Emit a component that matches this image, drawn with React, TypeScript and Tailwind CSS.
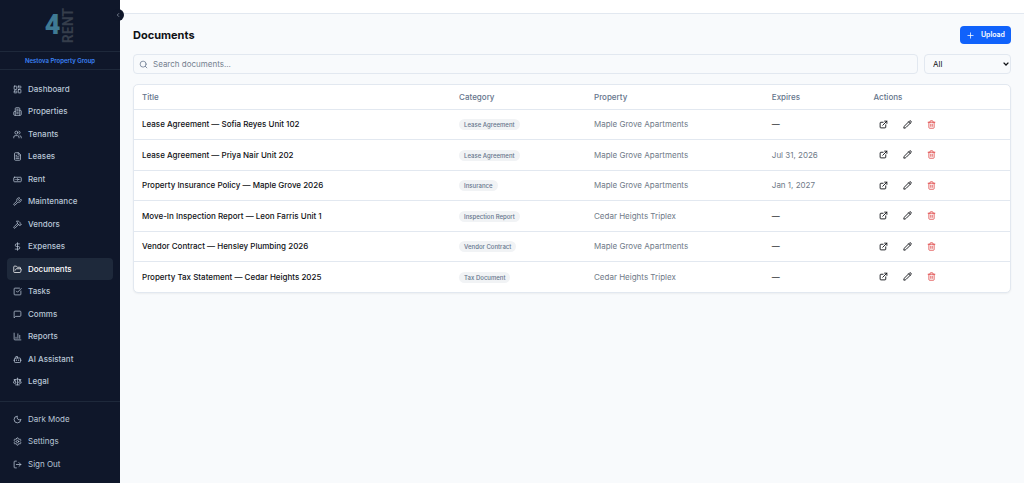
import type { ComponentType } from "react";
import {
  LayoutDashboard, Users, FileText, Banknote, Wrench, Hammer, DollarSign, FolderOpen,
  SquareCheckBig, ChartColumn, Bot, Scale, Moon, Settings, LogOut, ChevronLeft,
  Plus, Search, ExternalLink, Pencil, Trash2,
} from "lucide-react";

type IconProps = { className?: string };
type NavItem = { label: string; icon: ComponentType<IconProps> };

function LineIcon({ className, paths }: IconProps & { paths: string[] }) {
  return (
    <svg
      viewBox="0 0 24 24"
      fill="none"
      stroke="currentColor"
      strokeWidth={2}
      strokeLinecap="round"
      strokeLinejoin="round"
      aria-hidden="true"
      className={className}
    >
      {paths.map((d) => <path key={d} d={d} />)}
    </svg>
  );
}

function BuildingIcon({ className }: IconProps) {
  return (
    <LineIcon
      className={className}
      paths={[
        "M6 22V4a2 2 0 0 1 2-2h8a2 2 0 0 1 2 2v18Z",
        "M6 12H4a2 2 0 0 0-2 2v6a2 2 0 0 0 2 2h2",
        "M18 9h2a2 2 0 0 1 2 2v9a2 2 0 0 1-2 2h-2",
        "M10 6h4",
        "M10 10h4",
        "M10 14h4",
        "M10 18h4",
      ]}
    />
  );
}

function MessageIcon({ className }: IconProps) {
  return <LineIcon className={className} paths={["M21 15a2 2 0 0 1-2 2H7l-4 4V5a2 2 0 0 1 2-2h14a2 2 0 0 1 2 2z"]} />;
}

const nav: NavItem[] = [
  { label: "Dashboard", icon: LayoutDashboard },
  { label: "Properties", icon: BuildingIcon },
  { label: "Tenants", icon: Users },
  { label: "Leases", icon: FileText },
  { label: "Rent", icon: Banknote },
  { label: "Maintenance", icon: Wrench },
  { label: "Vendors", icon: Hammer },
  { label: "Expenses", icon: DollarSign },
  { label: "Documents", icon: FolderOpen },
  { label: "Tasks", icon: SquareCheckBig },
  { label: "Comms", icon: MessageIcon },
  { label: "Reports", icon: ChartColumn },
  { label: "AI Assistant", icon: Bot },
  { label: "Legal", icon: Scale },
];

const documents = [
  { title: "Lease Agreement — Sofia Reyes Unit 102", category: "Lease Agreement", property: "Maple Grove Apartments", expires: "" },
  { title: "Lease Agreement — Priya Nair Unit 202", category: "Lease Agreement", property: "Maple Grove Apartments", expires: "Jul 31, 2026" },
  { title: "Property Insurance Policy — Maple Grove 2026", category: "Insurance", property: "Maple Grove Apartments", expires: "Jan 1, 2027" },
  { title: "Move-In Inspection Report — Leon Farris Unit 1", category: "Inspection Report", property: "Cedar Heights Triplex", expires: "" },
  { title: "Vendor Contract — Hensley Plumbing 2026", category: "Vendor Contract", property: "Maple Grove Apartments", expires: "" },
  { title: "Property Tax Statement — Cedar Heights 2025", category: "Tax Document", property: "Cedar Heights Triplex", expires: "" },
];

function Logo() {
  return (
    <div className="flex h-[52px] items-center justify-center gap-px border-b border-[#1e293b] font-['Roboto',sans-serif] leading-none">
      <span className="text-[27px] font-black leading-none text-[#3f7a94]">4</span>
      <span className="rotate-180 text-[14px] font-bold leading-none text-[#353d4b] [writing-mode:vertical-rl]">RENT</span>
    </div>
  );
}

const rowBase = "flex w-full items-center gap-[6px] rounded-[4px] px-[6px] text-[8px] leading-3 h-[22px]";
const iconSize = "size-[9px] shrink-0";

function Sidebar() {
  return (
    <aside className="relative z-10 flex w-[120px] shrink-0 flex-col bg-[#0f172a] text-[#b9c6d6]">
      <Logo />
      <p className="border-b border-[#1e293b] py-[3px] text-center text-[6px] font-semibold leading-[11px] text-[#3b82f6]">
        Nestova Property Group
      </p>
      <nav className="flex-1 px-[7px] py-2" aria-label="Main">
        <ul>
          {nav.map(({ label, icon: Icon }) => (
            <li key={label} className="odd:h-[22px] even:h-[23px]">
              <a
                href="#"
                aria-current={label === "Documents" ? "page" : undefined}
                className={`${rowBase} font-medium ${label === "Documents" ? "bg-[#1e293b] text-white" : ""}`}
              >
                <Icon className={iconSize} />
                {label}
              </a>
            </li>
          ))}
        </ul>
      </nav>
      <div className="border-t border-[#1e293b] px-[7px] pt-[6px] pb-2">
        <button type="button" className={rowBase}><Moon className={iconSize} />Dark Mode</button>
        <a href="#" className={rowBase}><Settings className={iconSize} />Settings</a>
        <button type="button" className={`${rowBase} mt-px`}><LogOut className={iconSize} />Sign Out</button>
      </div>
      <button
        type="button"
        aria-label="Collapse sidebar"
        className="absolute -right-1 top-[9px] flex size-3 items-center justify-center rounded-full bg-[#0f172a] text-[#cbd5e1]"
      >
        <ChevronLeft className="size-[6px]" />
      </button>
    </aside>
  );
}

const actionBase = "flex size-5 items-center justify-center";

function DocumentsTable() {
  return (
    <div className="mt-[10px] overflow-hidden rounded-[5px] border border-[#e2e8f0] bg-white shadow-xs">
      <table className="w-full table-fixed border-collapse text-left text-[8px] leading-3">
        <colgroup>
          <col className="w-[36.2%]" />
          <col className="w-[15.4%]" />
          <col className="w-[20.3%]" />
          <col className="w-[11.6%]" />
          <col />
        </colgroup>
        <thead>
          <tr className="h-6 border-b border-[#e2e8f0] text-[#64748b]">
            {["Title", "Category", "Property", "Expires", "Actions"].map((h) => (
              <th key={h} scope="col" className="px-2 font-medium">{h}</th>
            ))}
          </tr>
        </thead>
        <tbody>
          {documents.map((d) => (
            <tr key={d.title} className="border-b border-[#e2e8f0] odd:h-[30px] even:h-[31px] last:border-0">
              <td className="px-2 font-medium text-[#0f1115]">{d.title}</td>
              <td className="px-2">
                <span className="inline-block rounded-full bg-[#f1f3f5] px-[5px] text-[6px] font-medium leading-[11px] text-[#64748b]">
                  {d.category}
                </span>
              </td>
              <td className="px-2 text-[#6f7a88]">{d.property}</td>
              <td className={`px-2 ${d.expires ? "text-[#6f7a88]" : "text-[#0f1115]"}`}>{d.expires || "—"}</td>
              <td className="px-2">
                <div className="flex gap-1">
                  <a href="#" aria-label={`Open ${d.title}`} className={`${actionBase} text-[#0f1115]`}>
                    <ExternalLink className="size-[9px]" strokeWidth={2.4} />
                  </a>
                  <button type="button" aria-label={`Edit ${d.title}`} className={`${actionBase} text-[#0f1115]`}>
                    <Pencil className="size-[9px]" strokeWidth={2.4} />
                  </button>
                  <button type="button" aria-label={`Delete ${d.title}`} className={`${actionBase} text-[#dc3a3a]`}>
                    <Trash2 className="size-[9px]" />
                  </button>
                </div>
              </td>
            </tr>
          ))}
        </tbody>
      </table>
    </div>
  );
}

export default function App() {
  return (
    <div className="flex min-h-screen bg-[#f8fafc] font-['Inter',sans-serif] text-[#0f1115]">
      <Sidebar />
      <div className="min-w-0 flex-1">
        <header className="h-[14px] border-b border-[#e2e8f0] bg-white" />
        <main className="px-[13px] pt-3">
          <div className="flex items-center justify-between">
            <h1 className="text-[11px] font-bold leading-4">Documents</h1>
            <button
              type="button"
              className="flex h-[18px] items-center gap-[6px] rounded-[4px] bg-[#1062fb] px-[6px] text-[7px] font-semibold text-white"
            >
              <Plus className="size-[9px]" />
              Upload
            </button>
          </div>
          <div className="mt-[10px] flex gap-[6px]">
            <div className="relative flex flex-1">
              <Search className="absolute left-[6px] top-[6px] size-[9px] text-[#64748b]" />
              <input
                type="search"
                aria-label="Search documents"
                placeholder="Search documents..."
                className="h-5 w-full rounded-[4px] border border-[#e2e8f0] bg-[#f8fafc] pl-[19px] pr-2 text-[8px] placeholder:text-[#74808f]"
              />
            </div>
            <div className="relative flex w-[87px]">
              <select
                aria-label="Category"
                className="h-5 w-full appearance-none rounded-[4px] border border-[#e2e8f0] bg-[#f8fafc] pl-2 text-[8px]"
              >
                <option>All</option>
                <option>Lease Agreement</option>
                <option>Insurance</option>
                <option>Inspection Report</option>
                <option>Vendor Contract</option>
                <option>Tax Document</option>
              </select>
              <svg
                viewBox="0 0 6 4"
                fill="none"
                stroke="currentColor"
                strokeWidth={1.3}
                aria-hidden="true"
                className="pointer-events-none absolute right-[2px] top-2 h-1 w-[6px]"
              >
                <path d="M.6.6 3 3 5.4.6" />
              </svg>
            </div>
          </div>
          <DocumentsTable />
        </main>
      </div>
    </div>
  );
}
